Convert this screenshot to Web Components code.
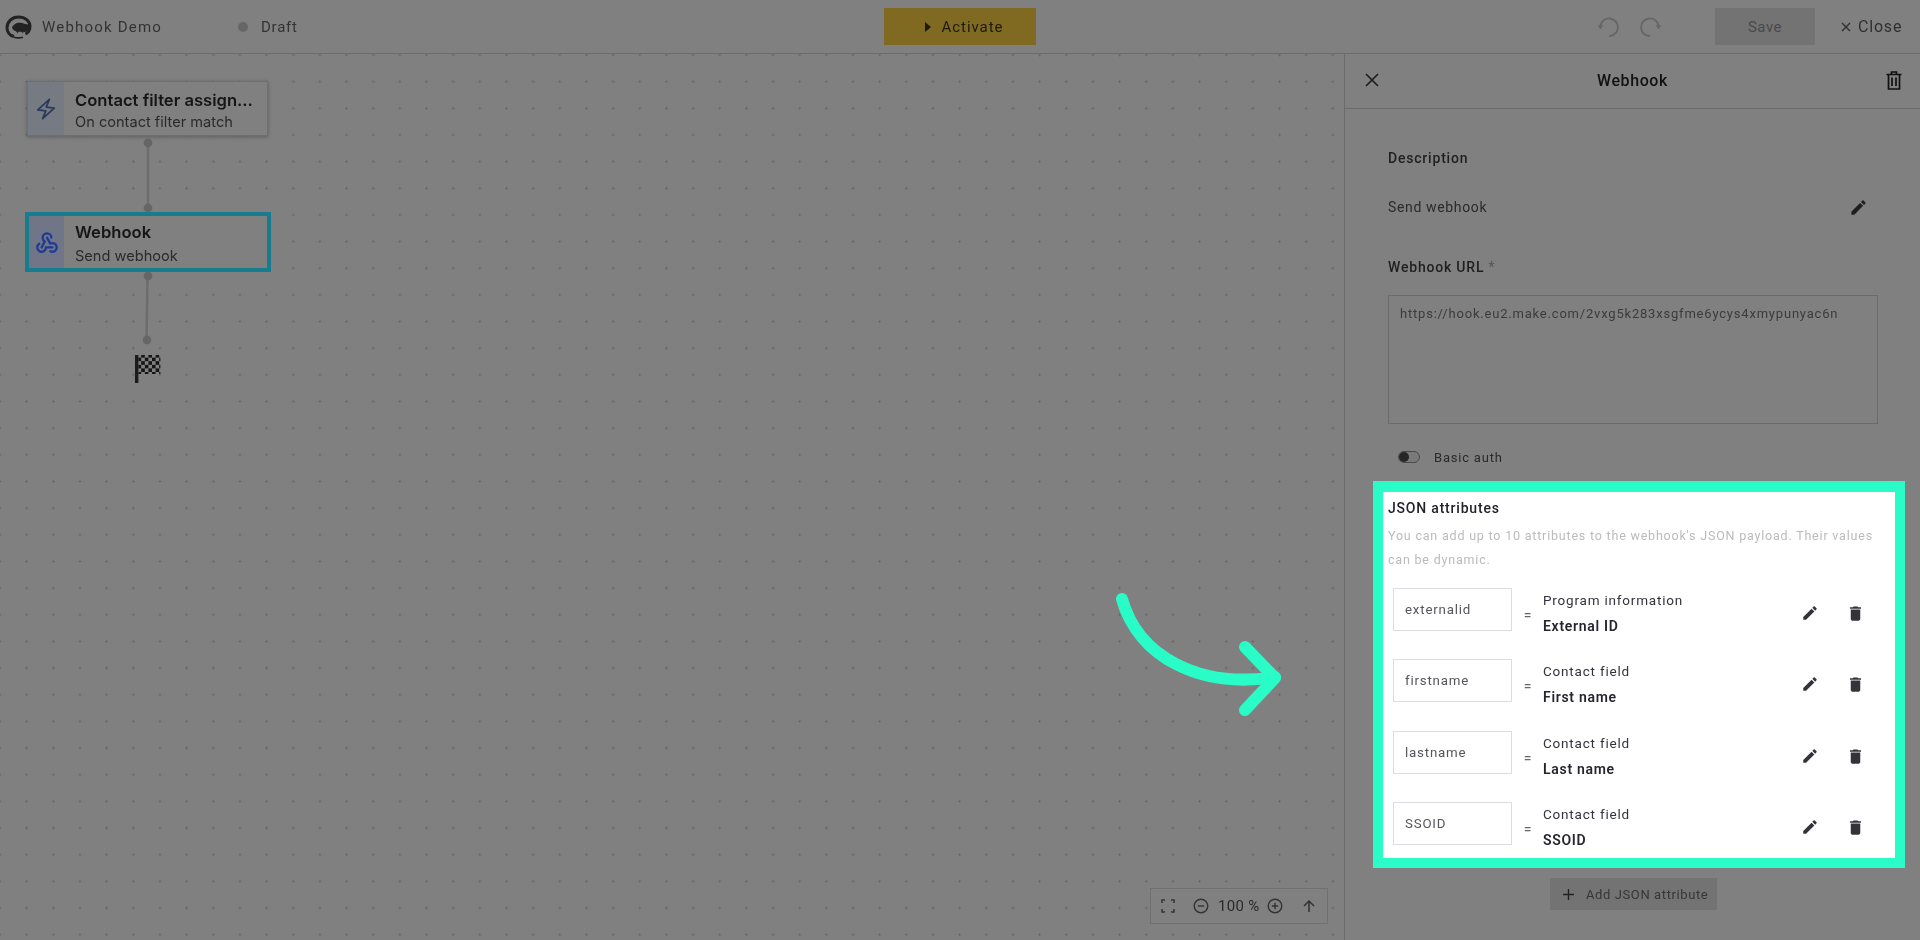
<!DOCTYPE html>
<html>
<head>
<meta charset="utf-8">
<title>Webhook Demo</title>
<style>
  html, body { margin: 0; height: 100%; background: #808080; overflow: hidden; }
  body { font-family: Roboto, "Liberation Sans", sans-serif; }
</style>
</head>
<body>
<app-shell>
  <top-bar slot="top"></top-bar>
  <flow-canvas slot="canvas"></flow-canvas>
  <side-panel slot="panel"></side-panel>
</app-shell>

<script>
const ICONS = {
  edit: '<path d="M3 17.25V21h3.75L17.81 9.94l-3.75-3.75L3 17.25zM20.71 7.04c.39-.39.39-1.02 0-1.41l-2.34-2.34c-.39-.39-1.02-.39-1.41 0l-1.83 1.83 3.75 3.75 1.83-1.83z"/>',
  trash: '<path d="M6 19c0 1.1.9 2 2 2h8c1.1 0 2-.9 2-2V7H6v12zM19 4h-3.5l-1-1h-5l-1 1H5v2h14V4z"/>',
};

function icon(name, size, color) {
  return `<svg width="${size}" height="${size}" viewBox="0 0 24 24" fill="${color}" style="display:block">${ICONS[name]}</svg>`;
}

class AppShell extends HTMLElement {
  constructor() {
    super();
    const shadow = this.attachShadow({ mode: 'open' });
    shadow.innerHTML = `
      <style>
        :host {
          display: grid;
          grid-template-columns: 1344px 576px;
          grid-template-rows: 54px 886px;
          width: 1920px;
          height: 940px;
          overflow: hidden;
          filter: blur(.35px);
        }
        ::slotted([slot="top"]) { grid-column: 1 / 3; }
      </style>
      <slot name="top"></slot>
      <slot name="canvas"></slot>
      <slot name="panel"></slot>
    `;
  }
}

class TopBar extends HTMLElement {
  constructor() {
    super();
    const shadow = this.attachShadow({ mode: 'open' });
    shadow.innerHTML = `
      <style>
        :host {
          display: flex;
          align-items: center;
          box-sizing: border-box;
          height: 54px;
          padding: 0 15px 0 5px;
          border-bottom: 1px solid #6c6c6c;
          color: #333;
          font-size: 15px;
          letter-spacing: .75px;
        }
        .logo { width: 27px; height: 24px; margin-top: 1px; flex: none; }
        .name { margin-left: 10px; width: 196px; letter-spacing: 1.2px; }
        .dot { width: 10px; height: 10px; border-radius: 50%; background: #666; margin-right: 13px; }
        .draft { width: 623px; }
        .activate {
          display: flex;
          align-items: center;
          justify-content: center;
          box-sizing: border-box;
          gap: 11px;
          width: 152px;
          height: 37px;
          padding-left: 8px;
          background: #806a22;
          color: #1d1a10;
          font-size: 15px;
          letter-spacing: .95px;
        }
        .tri { width: 0; height: 0; border-left: 6px solid #1d1a10; border-top: 5px solid transparent; border-bottom: 5px solid transparent; }
        .history { display: flex; gap: 13px; margin-left: 559px; }
        .save {
          display: flex;
          align-items: center;
          justify-content: center;
          width: 100px;
          height: 37px;
          margin-left: 51px;
          background: #737374;
          color: #4a4a4a;
          letter-spacing: .5px;
        }
        .close { display: flex; align-items: center; gap: 7px; margin-left: 26px; color: #2f2f2f; font-size: 16px; letter-spacing: .8px; }
      </style>
      <svg class="logo" viewBox="0 0 27 24">
        <path d="M9 21.5C4.5 20.5 2 16.8 2 12.8 2 6.5 7 2 13.5 2S25 6 25 11.5c0 3.6-2 6.2-4.5 7.5" fill="none" stroke="#222" stroke-width="3"/>
        <path d="M9 22.2c3 1 6 .8 9 0" fill="none" stroke="#222" stroke-width="1.6"/>
        <path d="M7 13c1-3.5 4.5-5.5 8-5.2 3 .2 5 1.5 6.5 1.5l3 .5-.5 4c-1.500 3-3.500 3.500-5.500 3l-.5 1.500-1.500-1.500h-3l-1 1.500-1.500-2C9 16 8 14.500 7 13z" fill="#222"/>
      </svg>
      <span class="name">Webhook Demo</span>
      <span class="dot"></span>
      <span class="draft">Draft</span>
      <div class="activate"><span class="tri"></span><span>Activate</span></div>
      <div class="history">
        <svg width="28" height="28" viewBox="0 0 28 28" fill="none" stroke="#666" stroke-width="1.900"><path d="M14 23a8.800 8.800 0 1 0 -8.500 -10.500"/><path d="M2.500 12.200h6L5.500 16.200z" fill="#666" stroke="none"/></svg>
        <svg width="28" height="28" viewBox="0 0 28 28" fill="none" stroke="#666" stroke-width="1.900"><path d="M14 23a8.800 8.800 0 1 1 8.500 -10.500"/><path d="M25.500 12.200h-6l3 4z" fill="#666" stroke="none"/></svg>
      </div>
      <div class="save">Save</div>
      <div class="close">
        <svg width="10" height="10" viewBox="0 0 10 10" stroke="#2f2f2f" stroke-width="1.4"><path d="M1 1l8 8M9 1l-8 8"/></svg>
        <span>Close</span>
      </div>
    `;
  }
}

class FlowNode extends HTMLElement {
  constructor() {
    super();
    const shadow = this.attachShadow({ mode: 'open' });
    shadow.innerHTML = `
      <style>
        :host {
          position: absolute;
          display: flex;
          box-sizing: border-box;
          font-family: Inter, "Noto Sans", sans-serif;
          background: #808080;
          border: 1px solid #6f6f6f;
          box-shadow: 0 1px 4px rgba(0,0,0,.28);
        }
        :host([selected]) { border: 4px solid #167c8e; box-shadow: none; }
        .side { flex: none; display: flex; align-items: center; justify-content: center; width: 36px; background: #767a83; }
        :host([selected]) .side { width: 35px; background: #707687; }
        .body { display: flex; flex-direction: column; padding: 6px 0 0 11px; }
        :host([selected]) .body { padding-top: 4px; }
        .title { font-size: 16.6px; font-weight: 600; color: #151515; line-height: 24px; white-space: nowrap; }
        .sub { font-size: 14.6px; color: #2a2a2a; line-height: 21px; white-space: nowrap; }
        :host([selected]) .sub { margin-top: 2px; }
      </style>
      <div class="side"><slot name="icon"></slot></div>
      <div class="body">
        <div class="title"><slot name="title"></slot></div>
        <div class="sub"><slot name="sub"></slot></div>
      </div>
    `;
  }
}

class FlowCanvas extends HTMLElement {
  constructor() {
    super();
    const shadow = this.attachShadow({ mode: 'open' });
    shadow.innerHTML = `
      <style>
        :host {
          display: block;
          position: relative;
          width: 1344px;
          height: 886px;
          background-color: #808080;
          background-image: radial-gradient(circle at center, #666 0, #666 .9px, transparent 1.3px);
          background-size: 26.667px 26.667px;
          background-position: -13.33px -12.33px;
        }
        .n1 { left: 27px; top: 27px; width: 241px; height: 55px; }
        .n2 { left: 25px; top: 158px; width: 246px; height: 60px; }
        svg.links { position: absolute; left: 0; top: 0; width: 300px; height: 360px; }
        .arrow { position: absolute; left: 1110px; top: 531px; width: 190px; height: 150px; overflow: visible; }
        .flag { position: absolute; left: 134px; top: 300px; }
      </style>
      <svg class="links" viewBox="0 0 300 360" fill="#666" stroke="none">
        <path d="M148 89V154M147.500 222 146.500 286" stroke="#6d6d6d" stroke-width="2.500" fill="none"/>
        <circle cx="148" cy="89" r="4.400"/>
        <circle cx="148" cy="154" r="4.400"/>
        <circle cx="148" cy="222" r="4.400"/>
        <circle cx="147" cy="286" r="4.400"/>
      </svg>
      <flow-node class="n1">
        <svg slot="icon" width="24" height="24" viewBox="0 0 24 24" fill="none" stroke="#2b3a58" stroke-width="1.800" stroke-linejoin="round" style="transform: rotate(8deg)"><path d="M14 2 4 14h8l-2 8 10-12h-8z"/></svg>
        <span slot="title">Contact filter assign...</span>
        <span slot="sub">On contact filter match</span>
      </flow-node>
      <flow-node class="n2" selected>
        <svg slot="icon" width="26" height="26" viewBox="0 0 24 24" fill="none" stroke="#1d3a94" stroke-width="2.100" stroke-linecap="round" stroke-linejoin="round"><path d="M4.876 13.61a4 4 0 1 0 6.124 3.39h6"/><path d="M15.066 20.502a4 4 0 1 0 1.934 -7.502c-.706 0 -1.424 .179 -2 .5l-3 -5.5"/><path d="M16 8a4 4 0 1 0 -8 0c0 1.506 .77 2.818 2 3.5l-3 5.5"/></svg>
        <span slot="title">Webhook</span>
        <span slot="sub">Send webhook</span>
      </flow-node>
      <svg class="flag" width="28" height="30" viewBox="0 0 28 30">
        <defs>
          <pattern id="chk" width="7.200" height="7.200" patternUnits="userSpaceOnUse">
            <rect width="3.600" height="3.600" fill="#161616"/>
            <rect x="3.600" y="3.600" width="3.600" height="3.600" fill="#161616"/>
          </pattern>
        </defs>
        <rect x="1" y="1" width="3.400" height="28" fill="#1c1c1c"/>
        <rect x="4.400" y="1" width="22" height="19" fill="url(#chk)"/>
      </svg>
      <svg class="arrow" viewBox="0 0 190 150" fill="none" stroke="#2afcc8" stroke-width="12" stroke-linecap="round" stroke-linejoin="round">
        <path d="M12 14C28 72 90 104 165 92"/>
        <path d="M135 62 165 93 135 125"/>
      </svg>
      <zoom-bar></zoom-bar>
    `;
  }
}

class ZoomBar extends HTMLElement {
  constructor() {
    super();
    const shadow = this.attachShadow({ mode: 'open' });
    shadow.innerHTML = `
      <style>
        :host {
          position: absolute;
          left: 1150px;
          top: 834px;
          box-sizing: border-box;
          width: 178px;
          height: 36px;
          border: 1px solid #707070;
          background: #808080;
          color: #2a2a2a;
          font-size: 15px;
          letter-spacing: .3px;
          display: flex;
          align-items: center;
        }
        svg { display: block; flex: none; }
        .pct { width: 41px; margin: 0 8px 0 9px; white-space: nowrap; }
      </style>
      <svg width="14" height="14" viewBox="0 0 14 14" fill="none" stroke="#333" stroke-width="1.500" style="margin-left:10px"><path d="M1 4V1h3M10 1h3v3M13 10v3h-3M4 13H1v-3"/></svg>
      <svg width="16" height="16" viewBox="0 0 16 16" fill="none" stroke="#333" stroke-width="1.400" style="margin-left:18px"><circle cx="8" cy="8" r="6.800"/><path d="M4.800 8h6.400"/></svg>
      <span class="pct">100 %</span>
      <svg width="16" height="16" viewBox="0 0 16 16" fill="none" stroke="#333" stroke-width="1.400"><circle cx="8" cy="8" r="6.800"/><path d="M4.800 8h6.400M8 4.800v6.400"/></svg>
      <svg width="14" height="14" viewBox="0 0 14 14" fill="none" stroke="#333" stroke-width="1.500" style="margin-left:19px"><path d="M7 13V2M2 7l5-5 5 5"/></svg>
    `;
  }
}

class SidePanel extends HTMLElement {
  constructor() {
    super();
    const shadow = this.attachShadow({ mode: 'open' });
    shadow.innerHTML = `
      <style>
        :host {
          display: block;
          box-sizing: border-box;
          width: 576px;
          height: 886px;
          border-left: 1px solid #6c6c6c;
          color: #222;
          font-size: 14px;
          letter-spacing: .8px;
        }
        header {
          display: flex;
          align-items: center;
          justify-content: space-between;
          box-sizing: border-box;
          height: 55px;
          padding: 0 18px 2px 20px;
          border-bottom: 1px solid #6c6c6c;
          font-size: 16px;
          font-weight: 500;
          color: #111;
          letter-spacing: .6px;
        }
        .content { padding: 0 43px; display: flex; flex-direction: column; }
        .label { font-weight: 500; color: #1f1f1f; line-height: 20px; }
        .desc { margin-top: 39px; }
        .value { display: flex; align-items: center; justify-content: space-between; margin-top: 29px; padding-right: 9px; color: #2a2a2a; height: 20px; }
        .value span { letter-spacing: .65px; }
        .url-label { margin-top: 40px; }
        .url-label i { font-style: normal; font-weight: 400; color: #555; }
        .url {
          box-sizing: border-box;
          margin-top: 18px;
          width: 490px;
          height: 129px;
          border: 1px solid #6b6b6b;
          padding: 8px 11px;
          font-size: 13px;
          line-height: 20px;
          color: #3b3b3b;
          white-space: nowrap;
        }
        .auth { display: flex; align-items: center; gap: 14px; margin: 23px 0 0 10px; height: 20px; font-size: 13px; color: #2a2a2a; }
        .toggle { position: relative; box-sizing: border-box; width: 22px; height: 12px; border-radius: 6px; border: 1px solid #4a4a4a; background: #7a7a7a; }
        .toggle::after { content: ""; position: absolute; left: 0; top: 0; width: 10px; height: 10px; border-radius: 50%; background: #262626; }
        json-attributes { margin: 14px -28px 0 -15px; }
        .add {
          display: flex;
          align-items: center;
          align-self: flex-start;
          box-sizing: border-box;
          margin: 10px 0 0 162px;
          width: 167px;
          height: 32px;
          padding-left: 13px;
          background: #737374;
          color: #363636;
          font-size: 13px;
          letter-spacing: .6px;
        }
        .add svg { margin-right: 12px; }
      </style>
      <header>
        <svg width="14" height="14" viewBox="0 0 14 14" stroke="#1c1c1c" stroke-width="1.600"><path d="M1 1l12 12M13 1L1 13"/></svg>
        <span>Webhook</span>
        <svg width="16" height="19" viewBox="0 0 16 19" fill="none" stroke="#111" stroke-width="1.700"><path d="M.5 3.500h15M5.500 3V1h5v2M2.500 3.500V18h11V3.500M6 6.500v8.500M10 6.500v8.500"/></svg>
      </header>
      <div class="content">
        <div class="label desc">Description</div>
        <div class="value"><span>Send webhook</span>${icon('edit', 19, '#1e1e1e')}</div>
        <div class="label url-label">Webhook URL <i>*</i></div>
        <div class="url">https://hook.eu2.make.com/2vxg5k283xsgfme6ycys4xmypunyac6n</div>
        <div class="auth"><span class="toggle"></span><span>Basic auth</span></div>
        <json-attributes>
          <json-row name="externalid" group="Program information" field="External ID"></json-row>
          <json-row name="firstname" group="Contact field" field="First name"></json-row>
          <json-row name="lastname" group="Contact field" field="Last name"></json-row>
          <json-row name="SSOID" group="Contact field" field="SSOID"></json-row>
        </json-attributes>
        <div class="add">
          <svg width="11" height="11" viewBox="0 0 11 11" stroke="#222" stroke-width="1.400"><path d="M5.500 0v11M0 5.500h11"/></svg>
          <span>Add JSON attribute</span>
        </div>
      </div>
    `;
  }
}

class JsonAttributes extends HTMLElement {
  constructor() {
    super();
    const shadow = this.attachShadow({ mode: 'open' });
    shadow.innerHTML = `
      <style>
        :host {
          display: block;
          box-sizing: border-box;
          height: 387px;
          border: 10px solid #2afcc8;
          border-top-width: 11px;
          background: #fff;
          padding: 6px 5px 0;
          font-size: 13px;
          letter-spacing: .8px;
        }
        h3 { margin: 0; font-size: 14px; font-weight: 500; line-height: 20px; color: #22222c; }
        p { margin: 6px 0 0; width: 488px; font-size: 12.5px; line-height: 23.5px; color: #bbb; }
        .rows { display: flex; flex-direction: column; gap: 28.6px; margin-top: 16.5px; }
      </style>
      <h3>JSON attributes</h3>
      <p>You can add up to 10 attributes to the webhook's JSON payload. Their values can be dynamic.</p>
      <div class="rows"><slot></slot></div>
    `;
  }
}

class JsonRow extends HTMLElement {
  constructor() {
    super();
    const shadow = this.attachShadow({ mode: 'open' });
    const attr = n => this.getAttribute(n);
    shadow.innerHTML = `
      <style>
        :host {
          display: flex;
          align-items: flex-start;
          height: 43px;
          padding-left: 5px;
          color: #33333d;
        }
        .name {
          box-sizing: border-box;
          flex: none;
          width: 119px;
          height: 43px;
          border: 1px solid #dcdce2;
          padding: 11px 0 0 11px;
          font-size: 13.3px;
          line-height: 20px;
          color: #55555c;
        }
        .eq { width: 31px; text-align: center; margin-top: 17px; color: #666; font-size: 14px; line-height: 20px; letter-spacing: 0; }
        .info { flex: none; width: 230px; font-size: 13.5px; line-height: 20px; }
        .info div:first-child { margin-top: 2px; }
        .info div:last-child { margin-top: 6px; font-size: 14px; font-weight: 600; letter-spacing: .7px; color: #25252e; }
        .tools { display: flex; gap: 26.5px; margin: 16px 0 0 28px; }
      </style>
      <div class="name">${attr('name')}</div>
      <div class="eq">=</div>
      <div class="info">
        <div>${attr('group')}</div>
        <div>${attr('field')}</div>
      </div>
      <div class="tools">${icon('edit', 18, '#33333a')}${icon('trash', 19, '#33333a')}</div>
    `;
  }
}

customElements.define('flow-node', FlowNode);
customElements.define('zoom-bar', ZoomBar);
customElements.define('flow-canvas', FlowCanvas);
customElements.define('top-bar', TopBar);
customElements.define('json-row', JsonRow);
customElements.define('json-attributes', JsonAttributes);
customElements.define('side-panel', SidePanel);
customElements.define('app-shell', AppShell);
</script>
</body>
</html>
